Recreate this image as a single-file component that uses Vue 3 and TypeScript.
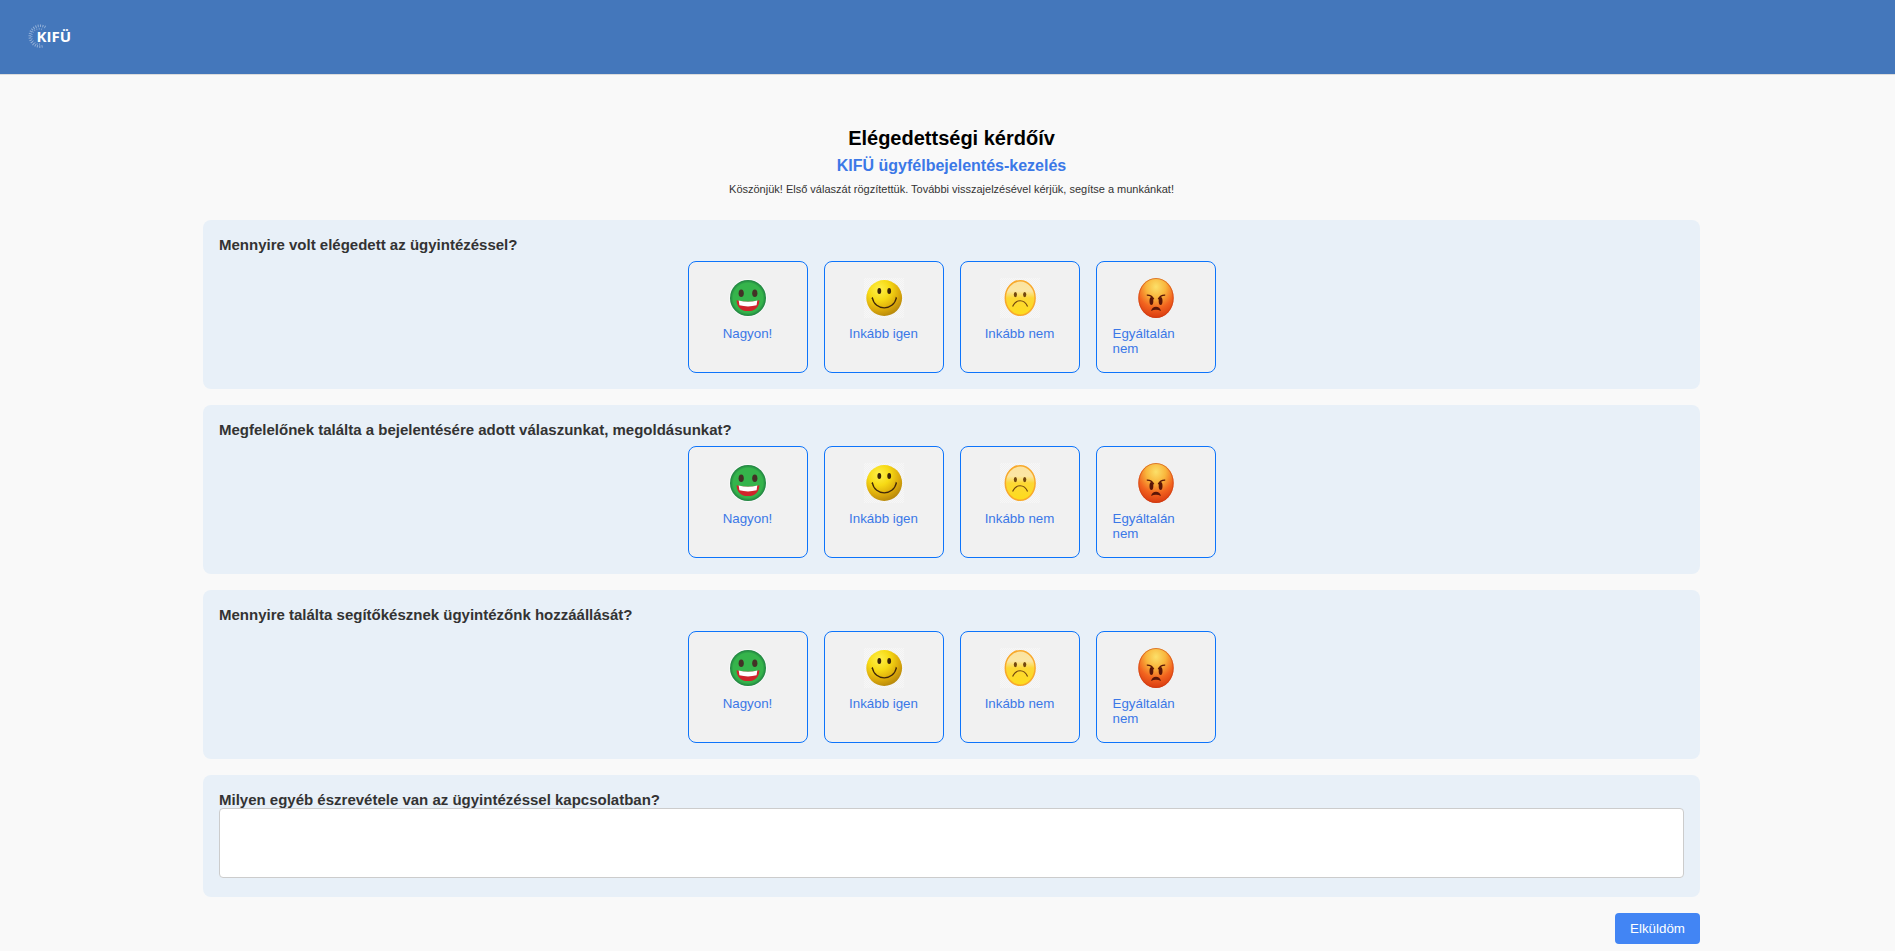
<script setup lang="ts">
import { ref } from 'vue'

type Mood = 'great' | 'good' | 'bad' | 'angry'

interface Option {
  mood: Mood
  label: string
}

const options: Option[] = [
  { mood: 'great', label: 'Nagyon!' },
  { mood: 'good', label: 'Inkább igen' },
  { mood: 'bad', label: 'Inkább nem' },
  { mood: 'angry', label: 'Egyáltalán nem' },
]

const questions: string[] = [
  'Mennyire volt elégedett az ügyintézéssel?',
  'Megfelelőnek találta a bejelentésére adott válaszunkat, megoldásunkat?',
  'Mennyire találta segítőkésznek ügyintézőnk hozzáállását?',
]

const answers = ref<(Mood | null)[]>(questions.map(() => null))
const comment = ref('')
</script>

<template>
  <div class="page">
    <svg class="defs" width="0" height="0" aria-hidden="true">
      <defs>
        <radialGradient id="g-great" cx="50%" cy="50%" r="50%">
          <stop offset="0.82" stop-color="#35b44b" />
          <stop offset="1" stop-color="#1f8040" />
        </radialGradient>
        <radialGradient id="g-good" cx="36%" cy="26%" r="76%">
          <stop offset="0" stop-color="#fff04a" />
          <stop offset="0.4" stop-color="#f7da15" />
          <stop offset="0.75" stop-color="#dcaa0b" />
          <stop offset="1" stop-color="#b98a0c" />
        </radialGradient>
        <linearGradient id="g-bad" x1="0" y1="0" x2="0" y2="1">
          <stop offset="0" stop-color="#fbe3a0" />
          <stop offset="0.3" stop-color="#fbe6a4" />
          <stop offset="0.5" stop-color="#fdd835" />
          <stop offset="1" stop-color="#fddc1c" />
        </linearGradient>
        <radialGradient id="g-angry" cx="50%" cy="22%" r="78%">
          <stop offset="0" stop-color="#fce069" />
          <stop offset="0.35" stop-color="#f9b63c" />
          <stop offset="0.68" stop-color="#f2641f" />
          <stop offset="1" stop-color="#d93a10" />
        </radialGradient>
        <pattern id="checker" width="2" height="2" patternUnits="userSpaceOnUse">
          <rect width="2" height="2" fill="#f7f7f7" />
          <rect width="1" height="1" fill="#f1f1f1" />
          <rect x="1" y="1" width="1" height="1" fill="#f1f1f1" />
        </pattern>
      </defs>
    </svg>

    <header class="topbar">
      <svg class="logo" width="48" height="30" viewBox="0 0 48 30" role="img" aria-label="KIFÜ">
        <g fill="none" stroke="#fff">
          <path d="M20.4 6.2A10.4 10.4 0 1 0 18 25.2" stroke-width="2.6" stroke-dasharray="1 1.3" opacity="0.42" />
          <path d="M17 8.4A7.6 7.6 0 1 0 15 23" stroke-width="1.8" stroke-dasharray="0.9 1.5" opacity="0.3" />
        </g>
        <text x="11.6" y="20.7" class="logo-text">KIFÜ</text>
      </svg>
    </header>

    <main class="survey">
      <div class="intro">
        <h1>Elégedettségi kérdőív</h1>
        <h2>KIFÜ ügyfélbejelentés-kezelés</h2>
        <p>Köszönjük! Első válaszát rögzítettük. További visszajelzésével kérjük, segítse a munkánkat!</p>
      </div>

      <section v-for="(question, i) in questions" :key="question" class="card">
        <div class="question">{{ question }}</div>
        <div class="options">
          <button
            v-for="option in options"
            :key="option.mood"
            type="button"
            class="option"
            :aria-pressed="answers[i] === option.mood"
            @click="answers[i] = option.mood"
          >
            <svg v-if="option.mood === 'great'" class="face" viewBox="0 0 40 40">
              <circle cx="20" cy="20" r="18.9" fill="#fafafa" />
              <circle cx="20" cy="20" r="18" fill="url(#g-great)" />
              <ellipse cx="13.2" cy="15.2" rx="2.6" ry="3.8" fill="#433126" />
              <ellipse cx="26.8" cy="15.2" rx="2.6" ry="3.8" fill="#433126" />
              <path d="M8.6 22.2Q20 25.4 31.4 22.2Q30.8 33 20 33Q9.2 33 8.6 22.2Z" fill="#d0242b" />
              <path d="M10.7 22.4Q20 25.2 29.3 22.4L28.6 27.3Q20 29.6 11.4 27.3Z" fill="#fff" />
            </svg>
            <svg v-else-if="option.mood === 'good'" class="face" viewBox="0 0 40 40">
              <rect width="40" height="40" fill="url(#checker)" />
              <circle cx="20.2" cy="20" r="17.9" fill="url(#g-good)" />
              <ellipse cx="15.3" cy="13" rx="1.9" ry="3" fill="#3b2407" />
              <ellipse cx="25.2" cy="13" rx="1.9" ry="3" fill="#3b2407" />
              <path d="M8.3 19.6C10.8 33.4 29.6 33.4 32.4 19.6" fill="none" stroke="#40270a" stroke-width="1.3" />
              <path d="M7.6 20.4l1.4-1M33 20.4l-1.4-1" stroke="#40270a" stroke-width="0.8" />
            </svg>
            <svg v-else-if="option.mood === 'bad'" class="face" viewBox="0 0 40 40">
              <rect width="40" height="40" fill="url(#checker)" />
              <ellipse cx="20.2" cy="20" rx="14.9" ry="17.3" fill="url(#g-bad)" stroke="#f8a92c" stroke-width="1.5" />
              <ellipse cx="15.4" cy="16.6" rx="1.6" ry="2.6" fill="#73470f" />
              <ellipse cx="24.7" cy="16.6" rx="1.6" ry="2.6" fill="#73470f" />
              <path d="M12.6 28.6C16 20.8 24.2 20.8 27.6 28.6" fill="none" stroke="#73470f" stroke-width="1.2" />
            </svg>
            <svg v-else class="face" viewBox="0 0 40 40">
              <ellipse cx="20" cy="20" rx="17.7" ry="20" fill="url(#g-angry)" />
              <ellipse cx="20" cy="20" rx="17.2" ry="19.5" fill="none" stroke="#c83c12" stroke-width="0.9" opacity="0.6" />
              <ellipse cx="15.4" cy="23" rx="1.9" ry="4" fill="#591507" />
              <ellipse cx="24.6" cy="23" rx="1.9" ry="4" fill="#591507" />
              <path d="M10.8 17.2Q15.6 17 17.8 21.2M29.2 17.2Q24.4 17 22.2 21.2" fill="none" stroke="#591507" stroke-width="1.2" />
              <path d="M15 33Q16.4 28.8 20 28.8Q23.6 28.8 25 33Q20 30.6 15 33Z" fill="#591507" />
            </svg>
            <span class="label">{{ option.label }}</span>
          </button>
        </div>
      </section>

      <section class="card comment">
        <div class="question">Milyen egyéb észrevétele van az ügyintézéssel kapcsolatban?</div>
        <textarea v-model="comment"></textarea>
      </section>

      <div class="actions">
        <button type="submit" class="send">Elküldöm</button>
      </div>
    </main>
  </div>
</template>

<style>
html,
body {
  margin: 0;
  background: #f9f9f9;
}
</style>

<style scoped>
.page {
  box-sizing: border-box;
  height: 951px;
  overflow: hidden;
  background: #f9f9f9;
  color: #333;
  font-family: "Liberation Sans", Arial, sans-serif;
}

.defs {
  position: absolute;
}

.topbar {
  display: flex;
  align-items: center;
  box-sizing: border-box;
  height: 75px;
  padding: 0 25px 2px;
  border-bottom: 1px solid #dcdcdc;
  background: #4477bb;
}

.logo {
  display: block;
}

.logo-text {
  fill: #fff;
  font: 700 15px "Open Sans", sans-serif;
}

.survey {
  width: 1497px;
  margin: 0 0 0 203px;
  padding-top: 52px;
}

.intro {
  height: 93px;
  text-align: center;
}

h1 {
  margin: 0;
  color: #000;
  font-size: 20px;
  line-height: 23px;
}

h2 {
  margin: 7px 0 0;
  color: #3b78e7;
  font-size: 16px;
  line-height: 18px;
}

p {
  margin: 8px 0 0;
  font-size: 11px;
  line-height: 13px;
}

.card {
  box-sizing: border-box;
  height: 169px;
  margin-bottom: 16px;
  padding: 16px;
  border-radius: 8px;
  background: #e8f0f8;
}

.question {
  font-size: 15px;
  font-weight: 700;
  line-height: 17px;
}

.options {
  display: flex;
  justify-content: center;
  gap: 16px;
  margin-top: 8px;
}

.option {
  display: flex;
  flex-direction: column;
  align-items: center;
  box-sizing: border-box;
  width: 120px;
  height: 112px;
  padding: 16px;
  border: 1px solid #0d74fb;
  border-radius: 8px;
  background: #f1f1f1;
  color: #3b78e7;
  font: 13.333px/15px "Liberation Sans", Arial, sans-serif;
  text-align: left;
  cursor: pointer;
}

.face {
  display: block;
  flex: none;
  width: 40px;
  height: 40px;
  margin-bottom: 8px;
}

.comment {
  height: 122px;
}

textarea {
  display: block;
  box-sizing: border-box;
  width: 100%;
  height: 70px;
  border: 1px solid #ccc;
  border-radius: 4px;
  background: #fff;
  font: inherit;
  resize: none;
}

.actions {
  display: flex;
  justify-content: flex-end;
}

.send {
  width: 85px;
  height: 31px;
  padding: 0;
  border: 0;
  border-radius: 4px;
  background: #4285f4;
  color: #fff;
  font: 13.333px/15px "Liberation Sans", Arial, sans-serif;
  cursor: pointer;
}
</style>
